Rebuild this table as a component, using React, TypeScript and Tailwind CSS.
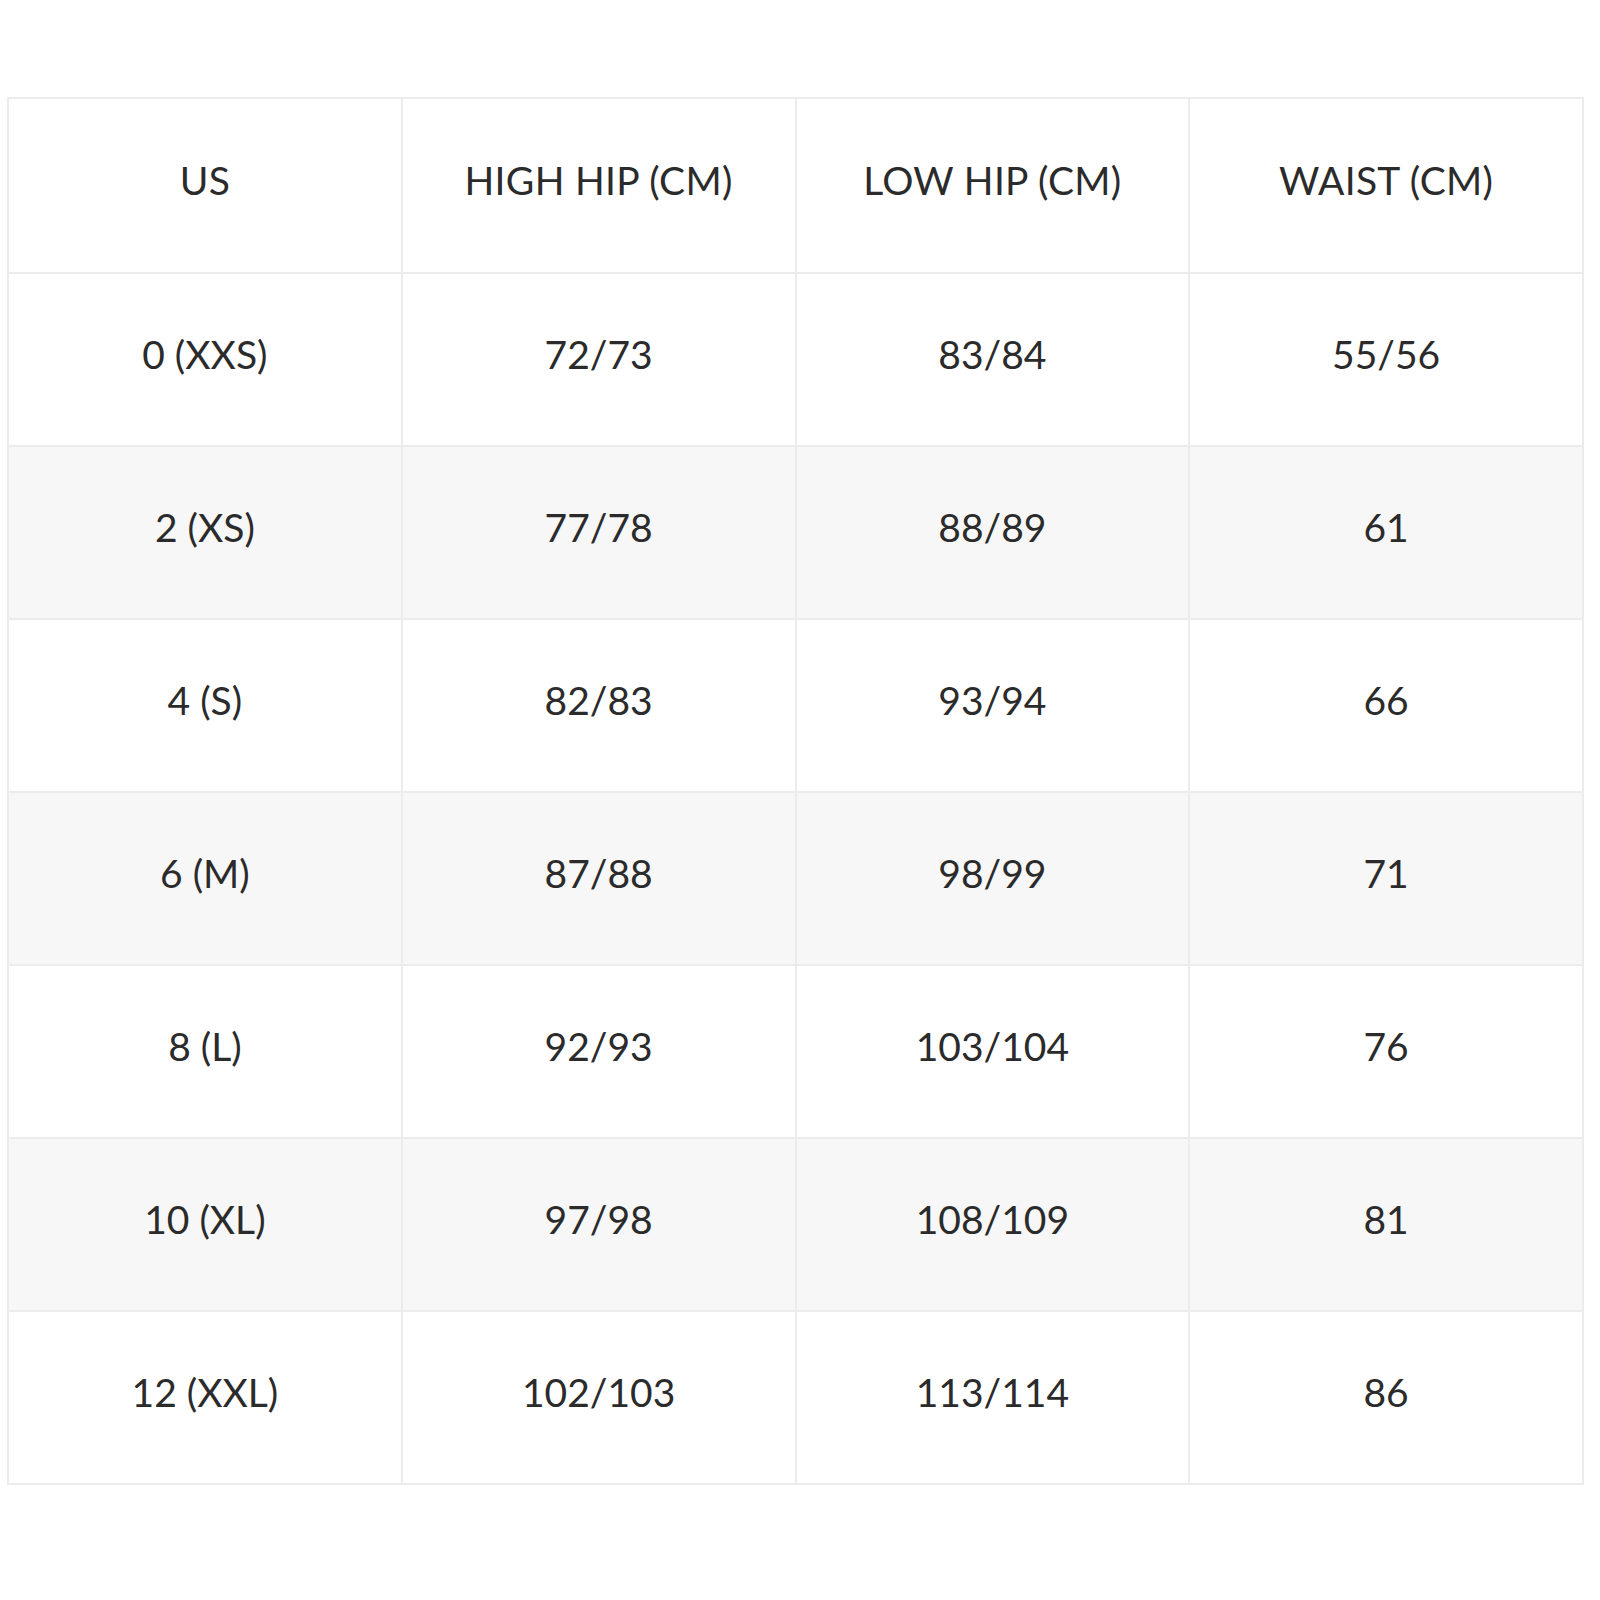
const headers = ['US', 'HIGH HIP (CM)', 'LOW HIP (CM)', 'WAIST (CM)'];

const rows = [
  ['0 (XXS)', '72/73', '83/84', '55/56'],
  ['2 (XS)', '77/78', '88/89', '61'],
  ['4 (S)', '82/83', '93/94', '66'],
  ['6 (M)', '87/88', '98/99', '71'],
  ['8 (L)', '92/93', '103/104', '76'],
  ['10 (XL)', '97/98', '108/109', '81'],
  ['12 (XXL)', '102/103', '113/114', '86'],
];

export default function App() {
  return (
    <div className="w-[1600px] h-[1600px] bg-white pt-[97px] pl-[7px] font-['Lato','Liberation_Sans',sans-serif] text-[#2b2b2b]">
      <table className="w-[1577px] border-collapse table-fixed text-[39px] text-center">
        <thead>
          <tr className="h-[175px]">
            {headers.map((h) => (
              <th key={h} className="border-2 border-[#ececec] font-normal pb-[10px] tracking-[0.3px]">
                {h}
              </th>
            ))}
          </tr>
        </thead>
        <tbody>
          {rows.map((row, i) => (
            <tr key={row[0]} className={`h-[173px] ${i % 2 === 1 ? 'bg-[#f7f7f7]' : 'bg-white'}`}>
              {row.map((cell, j) => (
                <td key={j} className="border-2 border-[#ececec] pb-[10px]">
                  {cell}
                </td>
              ))}
            </tr>
          ))}
        </tbody>
      </table>
    </div>
  );
}
